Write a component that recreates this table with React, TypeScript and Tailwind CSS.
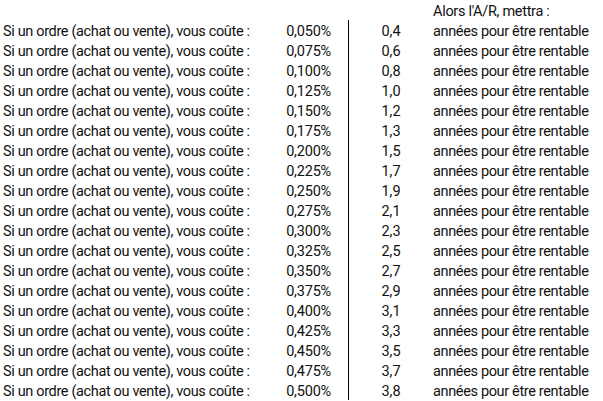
const rows: [string, string][] = [
  ["0,050%", "0,4"],
  ["0,075%", "0,6"],
  ["0,100%", "0,8"],
  ["0,125%", "1,0"],
  ["0,150%", "1,2"],
  ["0,175%", "1,3"],
  ["0,200%", "1,5"],
  ["0,225%", "1,7"],
  ["0,250%", "1,9"],
  ["0,275%", "2,1"],
  ["0,300%", "2,3"],
  ["0,325%", "2,5"],
  ["0,350%", "2,7"],
  ["0,375%", "2,9"],
  ["0,400%", "3,1"],
  ["0,425%", "3,3"],
  ["0,450%", "3,5"],
  ["0,475%", "3,7"],
  ["0,500%", "3,8"],
];

export default function App() {
  return (
    <div
      className="w-[603px] h-[401px] overflow-hidden bg-white text-[#111] text-[14.5px] leading-[20px]"
      style={{ fontFamily: "Roboto, 'Liberation Sans', sans-serif" }}
    >
      <div className="flex h-[20px] pt-[2px]">
        <div className="w-[349px]" />
        <div className="w-[84px]" />
        <div className="tracking-[-0.3px] whitespace-nowrap">Alors l'A/R, mettra :</div>
      </div>
      {rows.map(([pct, years]) => (
        <div key={pct} className="flex h-[20px]">
          <div className="w-[270px] pl-[3px] pt-[2px] whitespace-nowrap tracking-[-0.35px]">
            Si un ordre (achat ou vente), vous coûte :
          </div>
          <div className="w-[79px] pr-[17px] pt-[2px] text-right border-r border-black tracking-[-0.2px]">
            {pct}
          </div>
          <div className="w-[84px] pt-[2px] text-center">{years}</div>
          <div className="pt-[2px] whitespace-nowrap tracking-[-0.35px]">années pour être rentable</div>
        </div>
      ))}
    </div>
  );
}
